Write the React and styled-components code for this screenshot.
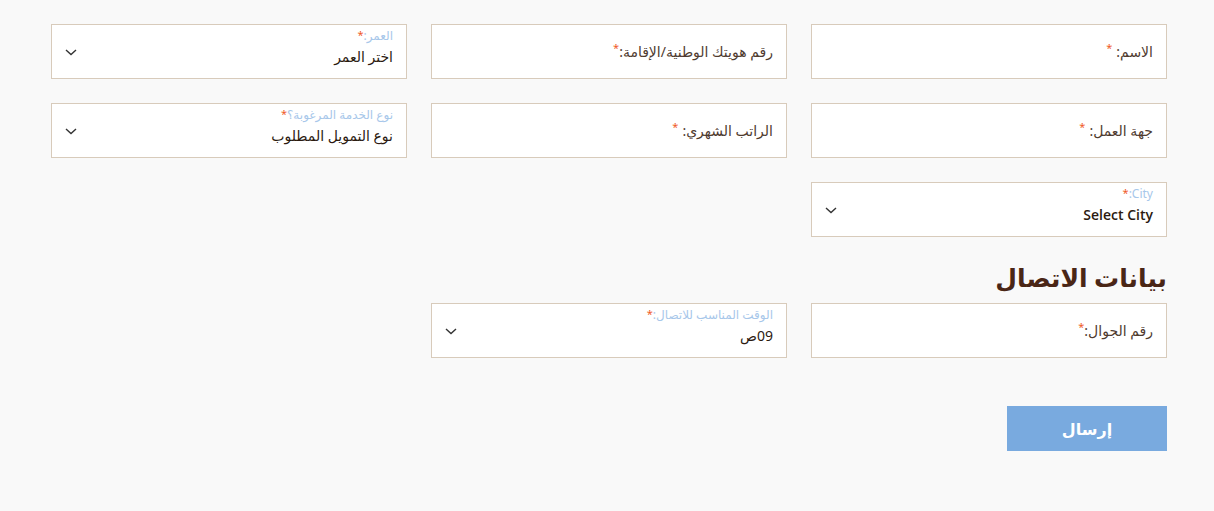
import React from "react";
import styled, { createGlobalStyle } from "styled-components";

const Global = createGlobalStyle`
  html, body { margin: 0; padding: 0; background: #f9f9f9; }
  body { font-family: "Noto Sans", "DejaVu Sans", sans-serif; }
`;

const Page = styled.div`
  direction: rtl;
  width: 1116px;
  margin-left: 51px;
  padding-top: 24px;
`;

const Grid = styled.div`
  display: grid;
  grid-template-columns: repeat(3, 356px);
  column-gap: 24px;
  row-gap: 24px;
`;

const Field = styled.div`
  box-sizing: border-box;
  height: 55px;
  background: #fff;
  border: 1px solid #d8cbbb;
  display: flex;
  align-items: center;
  padding: 0 13px;
  position: relative;
`;

const Label = styled.span`
  font-size: 14px;
  color: #4f3b30;
`;

const Star = styled.span`
  color: #f05a28;
  font-size: 11px;
  vertical-align: top;
  line-height: 1;
  margin-inline-start: ${(p) => (p.$gap ? "4px" : "0")};
`;

const SelectBody = styled.div`
  display: flex;
  flex-direction: column;
  align-items: flex-start;
  flex: 1;
  padding-bottom: 6px;
  gap: 3px;
`;

const Small = styled.span`
  font-size: 12px;
  line-height: 14px;
  color: #a7c7ea;
`;

const Value = styled.span`
  font-size: 14px;
  line-height: 22px;
  color: #2b1a10;
  font-weight: ${(p) => (p.$bold ? 600 : 400)};
  font-family: ${(p) => (p.$latin ? '"Open Sans", sans-serif' : "inherit")};
`;

const Chevron = styled.svg`
  width: 12px;
  height: 12px;
  margin-left: 0;
  flex: none;
`;

const Heading = styled.h2`
  margin: 24px 0 10px;
  font-size: 25px;
  line-height: 32px;
  font-weight: 700;
  color: #4a2616;
`;

const ButtonRow = styled.div`
  margin-top: 48px;
  display: flex;
`;

const Submit = styled.button`
  width: 160px;
  height: 45px;
  border: none;
  background: #79aadf;
  color: #fff;
  font-family: inherit;
  font-size: 16px;
  font-weight: 600;
`;

const Empty = styled.div``;

function Text({ label, gap }) {
  return (
    <Field>
      <Label>
        {label}
        <Star $gap={gap}>*</Star>
      </Label>
    </Field>
  );
}

function Select({ label, value, latin, bold }) {
  return (
    <Field>
      <SelectBody>
        <Small>
          {label}
          <Star>*</Star>
        </Small>
        <Value $latin={latin} $bold={bold}>{value}</Value>
      </SelectBody>
      <Chevron viewBox="0 0 12 12">
        <path d="M1 4 L6 8.5 L11 4" fill="none" stroke="#333" strokeWidth="1.4" />
      </Chevron>
    </Field>
  );
}

export default function App() {
  return (
    <>
      <Global />
      <Page>
        <Grid>
          <Text label="الاسم:" gap />
          <Text label="رقم هويتك الوطنية/الإقامة:" />
          <Select label="العمر:" value="اختر العمر" />
          <Text label="جهة العمل:" gap />
          <Text label="الراتب الشهري:" gap />
          <Select label="نوع الخدمة المرغوبة؟" value="نوع التمويل المطلوب" />
          <Select label="City:" value="Select City" latin bold />
        </Grid>
        <Heading>بيانات الاتصال</Heading>
        <Grid>
          <Text label="رقم الجوال:" />
          <Select label="الوقت المناسب للاتصال:" value="09ص" />
          <Empty />
        </Grid>
        <ButtonRow>
          <Submit>إرسال</Submit>
        </ButtonRow>
      </Page>
    </>
  );
}
